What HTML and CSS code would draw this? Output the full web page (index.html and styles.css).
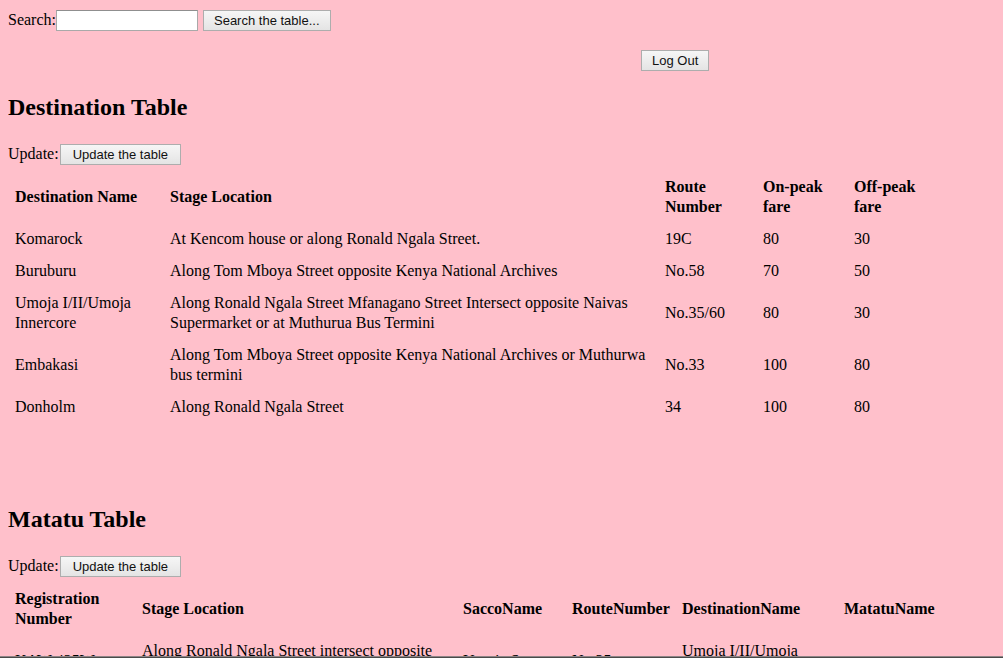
FILE: index.html
```html
<!DOCTYPE html>
<html>
<head>
<meta charset="utf-8">
<title>Tables</title>
<link rel="stylesheet" href="styles.css">
</head>
<body>
<div class="search-row">
  <label class="lbl" for="q">Search:</label>
  <input id="q" class="search-input" type="text">
  <button class="btn btn-search">Search the table...</button>
</div>
<div class="logout-row">
  <button class="btn">Log Out</button>
</div>

<h2 class="title">Destination Table</h2>
<div class="update-row">
  <span class="lbl">Update:</span>
  <button class="btn btn-update">Update the table</button>
</div>
<table class="data dest">
  <thead>
    <tr>
      <th class="d1">Destination Name</th>
      <th class="d2">Stage Location</th>
      <th class="d3">Route Number</th>
      <th class="d4">On-peak fare</th>
      <th class="d5">Off-peak fare</th>
    </tr>
  </thead>
  <tbody>
    <tr><td>Komarock</td><td>At Kencom house or along Ronald Ngala Street.</td><td>19C</td><td>80</td><td>30</td></tr>
    <tr><td>Buruburu</td><td>Along Tom Mboya Street opposite Kenya National Archives</td><td>No.58</td><td>70</td><td>50</td></tr>
    <tr><td>Umoja I/II/Umoja Innercore</td><td>Along Ronald Ngala Street Mfanagano Street Intersect opposite Naivas Supermarket or at Muthurua Bus Termini</td><td>No.35/60</td><td>80</td><td>30</td></tr>
    <tr><td>Embakasi</td><td>Along Tom Mboya Street opposite Kenya National Archives or Muthurwa bus termini</td><td>No.33</td><td>100</td><td>80</td></tr>
    <tr><td>Donholm</td><td>Along Ronald Ngala Street</td><td>34</td><td>100</td><td>80</td></tr>
  </tbody>
</table>

<section class="matatu">
  <h2 class="title">Matatu Table</h2>
  <div class="update-row">
    <span class="lbl">Update:</span>
    <button class="btn btn-update">Update the table</button>
  </div>
  <table class="data mat">
    <thead>
      <tr>
        <th class="m1">Registration Number</th>
        <th class="m2">Stage Location</th>
        <th class="m3">SaccoName</th>
        <th class="m4">RouteNumber</th>
        <th class="m5">DestinationName</th>
        <th class="m6">MatatuName</th>
      </tr>
    </thead>
    <tbody>
      <tr><td>KAW 425W</td><td>Along Ronald Ngala Street intersect opposite Naivas Supermarket</td><td>Umoja Sacco</td><td>No.35</td><td>Umoja I/II/Umoja Innercore</td><td></td></tr>
      <tr><td>KBC 118T</td><td>Along Tom Mboya Street opposite Kenya National Archives</td><td>Buruburu Sacco</td><td>No.58</td><td>Buruburu</td><td></td></tr>
    </tbody>
  </table>
</section>
<div class="frame-edge"></div>
</body>
</html>
```

FILE: styles.css
```css
html, body {
  background: #ffc0cb;
}
body {
  margin: 8px;
  font-family: "Liberation Serif", "Times New Roman", serif;
  font-size: 16px;
  color: #000;
}
.lbl {
  font-size: 16px;
}
.search-row,
.update-row,
.logout-row {
  display: flex;
  align-items: center;
  height: 24px;
}
.logout-row {
  margin-top: 16px;
  padding-left: 632px;
}
.search-input {
  box-sizing: border-box;
  width: 142px;
  height: 21px;
  margin: 0 5px 0 0;
  padding: 1px 2px;
  border: 1px solid #a9a9a9;
  border-top-color: #8f8f8f;
  background: #fff;
  font-family: "Liberation Sans", Arial, sans-serif;
  font-size: 13px;
}
.btn {
  box-sizing: border-box;
  height: 21px;
  margin: 0 0 0 1px;
  padding: 0 10px;
  border: 1px solid #adadad;
  border-radius: 0;
  background: linear-gradient(#f6f6f6, #e4e4e4);
  font-family: "Liberation Sans", Arial, sans-serif;
  font-size: 13px;
  color: #111;
  line-height: 19px;
}
.btn-search {
  margin-left: 0;
  padding: 0 10px;
}
.btn-update {
  padding: 0 12px;
}
.title {
  margin: 21px 0 0;
  font-size: 24px;
  font-weight: bold;
  line-height: 28px;
}
.update-row {
  margin-top: 21px;
}
.data {
  margin-top: 4px;
  table-layout: fixed;
  border-collapse: separate;
  border-spacing: 2px;
}
.data th,
.data td {
  box-sizing: border-box;
  padding: 5px;
  line-height: 20px;
  text-align: left;
  vertical-align: middle;
}
.data th {
  font-weight: bold;
}
.d1 { width: 153px; }
.d2 { width: 493px; }
.d3 { width: 96px; }
.d4 { width: 89px; }
.d5 { width: 80px; }

.m1 { width: 125px; }
.m2 { width: 319px; }
.m3 { width: 107px; }
.m4 { width: 108px; }
.m5 { width: 160px; }
.m6 { width: 150px; }

.matatu {
  margin-top: 81px;
}
.frame-edge {
  position: fixed;
  left: 0;
  right: 0;
  bottom: 0;
  height: 1px;
  background: #4a4a4a;
  border-top: 1px solid #8e8486;
}
```
